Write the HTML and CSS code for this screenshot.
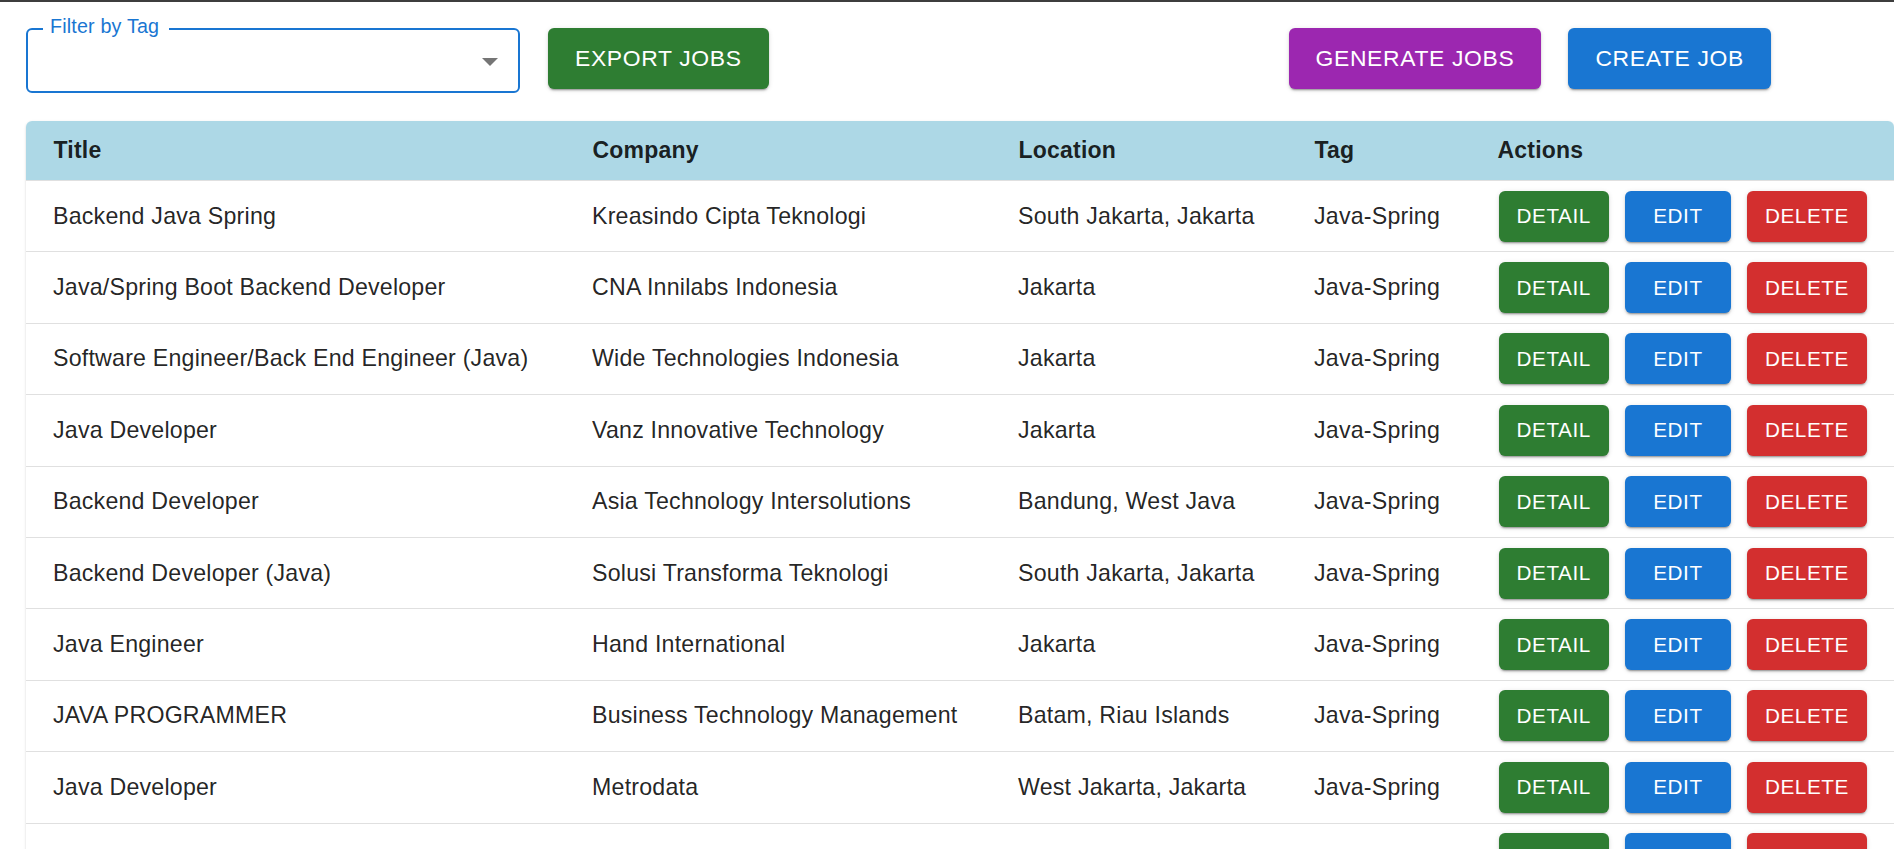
FILE: index.html
```html
<!DOCTYPE html>
<html lang="en">
<head>
<meta charset="utf-8">
<title>Jobs</title>
<link rel="stylesheet" href="styles.css">
</head>
<body>
<div class="page">
  <div class="toolbar">
    <div class="filter">
      <span class="filter-label">Filter by Tag</span>
      <span class="filter-arrow"></span>
    </div>
    <button class="btn btn-lg btn-green">Export Jobs</button>
    <div class="toolbar-right">
      <button class="btn btn-lg btn-purple">Generate Jobs</button>
      <button class="btn btn-lg btn-blue">Create Job</button>
    </div>
  </div>

  <div class="table-wrap">
    <table class="jobs">
      <colgroup>
        <col class="c-title"><col class="c-company"><col class="c-location"><col class="c-tag"><col class="c-actions">
      </colgroup>
      <thead>
        <tr>
          <th><div class="cell head">Title</div></th>
          <th><div class="cell head">Company</div></th>
          <th><div class="cell head">Location</div></th>
          <th><div class="cell head">Tag</div></th>
          <th><div class="cell head">Actions</div></th>
        </tr>
      </thead>
      <tbody>
        <tr>
          <td><div class="cell">Backend Java Spring</div></td>
          <td><div class="cell">Kreasindo Cipta Teknologi</div></td>
          <td><div class="cell">South Jakarta, Jakarta</div></td>
          <td><div class="cell">Java-Spring</div></td>
          <td><div class="cell actions"><button class="btn btn-sm btn-green">Detail</button><button class="btn btn-sm btn-blue btn-edit">Edit</button><button class="btn btn-sm btn-red">Delete</button></div></td>
        </tr>
        <tr>
          <td><div class="cell">Java/Spring Boot Backend Developer</div></td>
          <td><div class="cell">CNA Innilabs Indonesia</div></td>
          <td><div class="cell">Jakarta</div></td>
          <td><div class="cell">Java-Spring</div></td>
          <td><div class="cell actions"><button class="btn btn-sm btn-green">Detail</button><button class="btn btn-sm btn-blue btn-edit">Edit</button><button class="btn btn-sm btn-red">Delete</button></div></td>
        </tr>
        <tr>
          <td><div class="cell">Software Engineer/Back End Engineer (Java)</div></td>
          <td><div class="cell">Wide Technologies Indonesia</div></td>
          <td><div class="cell">Jakarta</div></td>
          <td><div class="cell">Java-Spring</div></td>
          <td><div class="cell actions"><button class="btn btn-sm btn-green">Detail</button><button class="btn btn-sm btn-blue btn-edit">Edit</button><button class="btn btn-sm btn-red">Delete</button></div></td>
        </tr>
        <tr>
          <td><div class="cell">Java Developer</div></td>
          <td><div class="cell">Vanz Innovative Technology</div></td>
          <td><div class="cell">Jakarta</div></td>
          <td><div class="cell">Java-Spring</div></td>
          <td><div class="cell actions"><button class="btn btn-sm btn-green">Detail</button><button class="btn btn-sm btn-blue btn-edit">Edit</button><button class="btn btn-sm btn-red">Delete</button></div></td>
        </tr>
        <tr>
          <td><div class="cell">Backend Developer</div></td>
          <td><div class="cell">Asia Technology Intersolutions</div></td>
          <td><div class="cell">Bandung, West Java</div></td>
          <td><div class="cell">Java-Spring</div></td>
          <td><div class="cell actions"><button class="btn btn-sm btn-green">Detail</button><button class="btn btn-sm btn-blue btn-edit">Edit</button><button class="btn btn-sm btn-red">Delete</button></div></td>
        </tr>
        <tr>
          <td><div class="cell">Backend Developer (Java)</div></td>
          <td><div class="cell">Solusi Transforma Teknologi</div></td>
          <td><div class="cell">South Jakarta, Jakarta</div></td>
          <td><div class="cell">Java-Spring</div></td>
          <td><div class="cell actions"><button class="btn btn-sm btn-green">Detail</button><button class="btn btn-sm btn-blue btn-edit">Edit</button><button class="btn btn-sm btn-red">Delete</button></div></td>
        </tr>
        <tr>
          <td><div class="cell">Java Engineer</div></td>
          <td><div class="cell">Hand International</div></td>
          <td><div class="cell">Jakarta</div></td>
          <td><div class="cell">Java-Spring</div></td>
          <td><div class="cell actions"><button class="btn btn-sm btn-green">Detail</button><button class="btn btn-sm btn-blue btn-edit">Edit</button><button class="btn btn-sm btn-red">Delete</button></div></td>
        </tr>
        <tr>
          <td><div class="cell">JAVA PROGRAMMER</div></td>
          <td><div class="cell">Business Technology Management</div></td>
          <td><div class="cell">Batam, Riau Islands</div></td>
          <td><div class="cell">Java-Spring</div></td>
          <td><div class="cell actions"><button class="btn btn-sm btn-green">Detail</button><button class="btn btn-sm btn-blue btn-edit">Edit</button><button class="btn btn-sm btn-red">Delete</button></div></td>
        </tr>
        <tr>
          <td><div class="cell">Java Developer</div></td>
          <td><div class="cell">Metrodata</div></td>
          <td><div class="cell">West Jakarta, Jakarta</div></td>
          <td><div class="cell">Java-Spring</div></td>
          <td><div class="cell actions"><button class="btn btn-sm btn-green">Detail</button><button class="btn btn-sm btn-blue btn-edit">Edit</button><button class="btn btn-sm btn-red">Delete</button></div></td>
        </tr>
        <tr>
          <td><div class="cell"></div></td>
          <td><div class="cell"></div></td>
          <td><div class="cell"></div></td>
          <td><div class="cell"></div></td>
          <td><div class="cell actions"><button class="btn btn-sm btn-green">Detail</button><button class="btn btn-sm btn-blue btn-edit">Edit</button><button class="btn btn-sm btn-red">Delete</button></div></td>
        </tr>
      </tbody>
    </table>
  </div>
</div>
</body>
</html>
```

FILE: styles.css
```css
* { box-sizing: border-box; }

html, body {
  margin: 0;
  padding: 0;
  background: #ffffff;
}

body {
  font-family: "Liberation Sans", Arial, sans-serif;
  color: rgba(0, 0, 0, 0.87);
  border-top: 2px solid #3d3d3d;
  overflow: hidden;
}

.page {
  padding: 26px 0 0 26px;
}

/* ---------- toolbar ---------- */
.toolbar {
  display: flex;
  align-items: flex-start;
  gap: 28px;
  padding-right: 123px;
}

.toolbar-right {
  margin-left: auto;
  display: flex;
  gap: 27px;
}

.filter {
  position: relative;
  width: 494px;
  height: 65px;
  border: 2px solid #1976d2;
  border-radius: 6px;
  flex-shrink: 0;
}

.filter-label {
  position: absolute;
  left: 15px;
  top: -13.5px;
  padding: 0 10px 0 7px;
  background: #ffffff;
  font-size: 19.7px;
  line-height: 1;
  letter-spacing: 0.009em;
  color: #1976d2;
  white-space: nowrap;
}

.filter-arrow {
  position: absolute;
  right: 20px;
  top: 28px;
  width: 0;
  height: 0;
  border-left: 8px solid transparent;
  border-right: 8px solid transparent;
  border-top: 8px solid rgba(0, 0, 0, 0.54);
}

/* ---------- buttons ---------- */
.btn {
  font-family: "Liberation Sans", Arial, sans-serif;
  font-weight: 500;
  text-transform: uppercase;
  letter-spacing: 0.02857em;
  color: #ffffff;
  border: 0;
  border-radius: 6px;
  cursor: pointer;
  white-space: nowrap;
  box-shadow: 0 3px 1px -2px rgba(0, 0, 0, 0.2), 0 2px 2px 0 rgba(0, 0, 0, 0.14), 0 1px 5px 0 rgba(0, 0, 0, 0.12);
}

.btn-lg {
  height: 61px;
  padding: 0 27px;
  font-size: 22.9px;
  flex-shrink: 0;
}

.btn-sm {
  height: 51px;
  padding: 0 18px;
  font-size: 20.7px;
}

.btn-edit {
  width: 106px;
}

.btn-green { background: #2e7d32; }
.btn-blue { background: #1976d2; }
.btn-purple { background: #9c27b0; }
.btn-red { background: #d32f2f; }

/* ---------- table ---------- */
.table-wrap {
  margin-top: 28px;
  width: 1868px;
  border-radius: 6px 6px 0 0;
  overflow: hidden;
  box-shadow: 0 2px 1px -1px rgba(0, 0, 0, 0.2), 0 1px 1px 0 rgba(0, 0, 0, 0.14), 0 1px 3px 0 rgba(0, 0, 0, 0.12);
}

.jobs {
  width: 100%;
  table-layout: fixed;
  border-collapse: separate;
  border-spacing: 0;
}

.c-title { width: 539px; }
.c-company { width: 426px; }
.c-location { width: 296px; }
.c-tag { width: 183px; }
.c-actions { width: 424px; }

.jobs th,
.jobs td {
  padding: 0;
  text-align: left;
  vertical-align: middle;
  border-bottom: 1px solid #e0e0e0;
}

.jobs thead th {
  background: #add8e6;
}

.cell {
  display: flex;
  align-items: center;
  height: 70.4px;
  padding-left: 27px;
  font-size: 23.2px;
  letter-spacing: 0.009em;
  white-space: nowrap;
}

.cell.head {
  height: 59px;
  font-size: 23px;
  font-weight: 700;
  padding-left: 27.5px;
}

.cell.actions {
  gap: 16px;
  padding-left: 28.5px;
}
```
